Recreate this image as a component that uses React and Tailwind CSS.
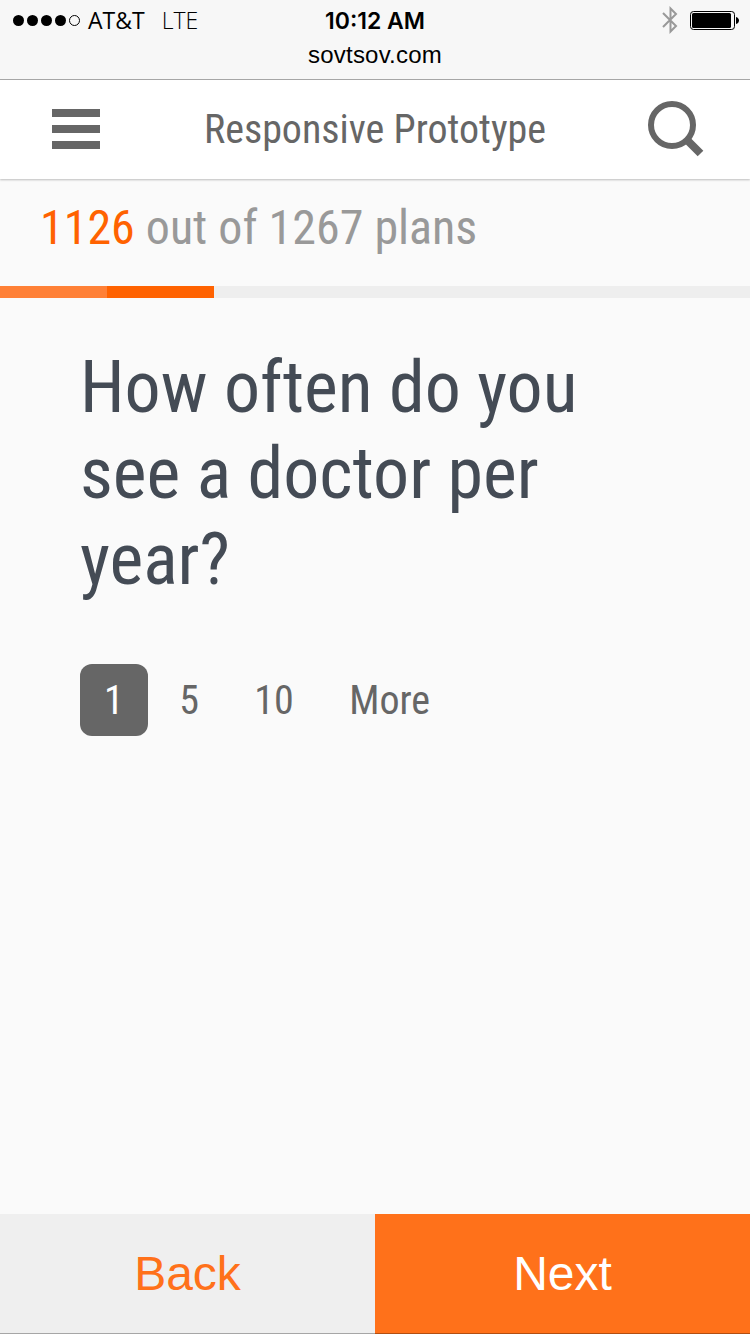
import React, { useState } from "react";

const OPTIONS = ["1", "5", "10", "More"];

const progress = [
  { id: 1, width: 107, color: "bg-[#ff8036]" },
  { id: 2, width: 107, color: "bg-[#ff6200]" },
];

const BluetoothIcon = () => (
  <svg width="16" height="28" viewBox="0 0 16 28" fill="none">
    <path
      d="M1 7L14 20L8.5 25.5V2.5L14 8L1 21"
      stroke="#999999"
      strokeWidth="2"
    />
  </svg>
);

const BatteryIcon = () => (
  <svg width="50" height="20" viewBox="0 0 50 20">
    <rect
      x="0.5"
      y="1.5"
      width="44"
      height="18"
      rx="3"
      fill="none"
      stroke="#000"
    />
    <rect x="2" y="3" width="39" height="15" rx="1.5" fill="#000" />
    <path d="M46 7c4 1 4 6 0 7z" fill="#000" />
  </svg>
);

const SearchIcon = () => (
  <svg width="58" height="58" viewBox="0 0 58 58" fill="none">
    <circle cx="25" cy="25" r="21" stroke="#666666" strokeWidth="6" />
    <path d="M39 39L53.5 53.5" stroke="#666666" strokeWidth="8" />
  </svg>
);

const StatusBar = () => (
  <div className="h-20 shrink-0 border-b border-[#a9a9a9] bg-[#f7f7f7] text-black font-stretch-normal">
    <div className="flex h-10 items-center justify-between pl-[13px] pr-[10px]">
      <div className="flex w-[257px] items-center">
        <div className="flex gap-[3px]">
          {[1, 2, 3, 4].map((dot) => (
            <span key={dot} className="h-[11px] w-[11px] rounded-full bg-black" />
          ))}
          <span className="h-[11px] w-[11px] rounded-full border border-black" />
        </div>
        <span className="ml-2 font-['Open_Sans',sans-serif] text-[23px]">
          AT&amp;T
        </span>
        <span className="ml-[17px] font-['Open_Sans',sans-serif] text-[23px] font-light">
          LTE
        </span>
      </div>
      <span className="pt-0.5 font-['Inter',sans-serif] text-[23px] font-semibold">
        10:12 AM
      </span>
      <div className="flex w-[260px] items-center justify-end">
        <BluetoothIcon />
        <span className="w-3" />
        <BatteryIcon />
      </div>
    </div>
    <p className="text-center font-['Liberation_Sans',sans-serif] text-2xl leading-[30px] tracking-[0.2px]">
      sovtsov.com
    </p>
  </div>
);

const Header = () => (
  <header className="z-10 flex h-[99px] shrink-0 items-center justify-between bg-white pb-px pl-[52px] pr-[45px] shadow-[0_1px_2px_rgba(0,0,0,0.25)]">
    <button className="flex w-[51px] flex-col gap-2">
      <span className="h-2 w-12 bg-[#666666]" />
      <span className="h-2 w-12 bg-[#666666]" />
      <span className="h-2 w-12 bg-[#666666]" />
    </button>
    <h1 className="pt-0.5 text-[40px] text-[#666666]">Responsive Prototype</h1>
    <button>
      <SearchIcon />
    </button>
  </header>
);

const App = () => {
  const [selected, setSelected] = useState("1");

  return (
    <div className="flex h-[1334px] w-[750px] flex-col overflow-hidden bg-[#fafafa] font-['Roboto_Condensed','Roboto',sans-serif] font-stretch-condensed">
      <StatusBar />
      <Header />

      <div className="flex h-[107px] shrink-0 items-start pl-10 pt-[21px]">
        <p className="text-5xl leading-[56px] text-[#999999]">
          <span className="text-[#ff6200]">1126</span> out of 1267 plans
        </p>
      </div>
      <div className="flex h-3 shrink-0 bg-[#eeeeee]">
        {progress.map((step) => (
          <div
            key={step.id}
            className={step.color}
            style={{ width: step.width }}
          />
        ))}
      </div>

      <main className="flex-1 px-20 pt-[47px]">
        <h2 className="w-[540px] text-7xl leading-[86px] tracking-[-0.05px] text-[#444b55]">
          How often do you see a doctor per year?
        </h2>
        <div className="mt-[61px] flex gap-[7.4px]">
          {OPTIONS.map((option) => (
            <button
              key={option}
              onClick={() => setSelected(option)}
              className={`h-[72px] rounded-xl px-6 pt-0.5 text-[40px] ${
                selected === option
                  ? "bg-[#666666] text-white"
                  : "text-[#666666]"
              }`}
            >
              {option}
            </button>
          ))}
        </div>
      </main>

      <footer className="flex h-[120px] shrink-0 font-['Liberation_Sans',sans-serif] text-5xl font-stretch-normal">
        <button className="flex-1 border-b border-[#a6a6a6] bg-[#efefef] text-[#ff711a]">
          Back
        </button>
        <button className="flex-1 border-b border-[#b24f12] bg-[#ff711a] text-white">
          Next
        </button>
      </footer>
    </div>
  );
};

export default App;
